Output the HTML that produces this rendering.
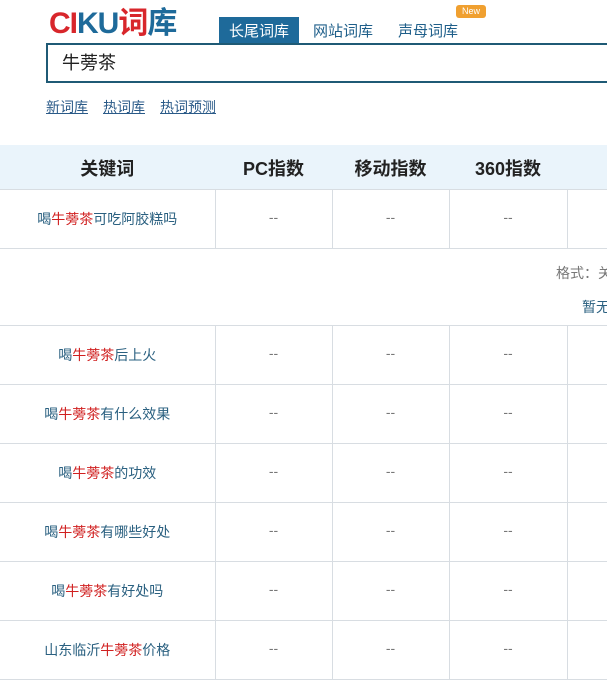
<!DOCTYPE html>
<html><head><meta charset="utf-8"><style>
body{margin:0;width:607px;height:680px;overflow:hidden;background:#fff;font-family:"Liberation Sans","Noto Sans CJK SC",sans-serif;position:relative}
.a{position:absolute;white-space:nowrap}
.logo{left:49px;top:6px;font-size:30px;font-weight:bold;letter-spacing:-1px;line-height:36px}
.tab{top:17px;height:27px;line-height:29px;font-size:15px;color:#1f5f8a}
.search{left:46px;top:43px;width:600px;height:36px;border:2px solid #1f5a75;font-size:18px;line-height:36px;text-indent:14px;color:#222}
.links{left:46px;top:97px;font-size:14px;color:#2a5a88}
.links span{text-decoration:underline;margin-right:15px}
table{position:absolute;left:0;top:145px;border-collapse:collapse;table-layout:fixed;width:720px}
td,th{border:1px solid #d8dde2;text-align:center;font-size:14px;color:#777;padding:0}
tr td:first-child,tr th:first-child{border-left:none}
th{background:#eaf4fb;height:43px;font-size:18px;color:#222;border-color:#eaf4fb;border-bottom:1px solid #d8dde2}
td.k{color:#2a6080}
td.k b{font-weight:normal;color:#d02020}
tr.r td{height:58px;vertical-align:middle}
tr.r td:not(.k){vertical-align:top;padding-top:19px;height:39px}
</style></head><body>
<div class="a logo"><span style="color:#d8262b">CI</span><span style="color:#1e6a9a">KU</span><span style="color:#d8262b">词</span><span style="color:#1e6a9a">库</span></div>
<div class="a tab" style="left:219px;width:80px;background:#1e6a9a;color:#fff;text-align:center">长尾词库</div>
<div class="a tab" style="left:313px">网站词库</div>
<div class="a tab" style="left:398px">声母词库</div>
<div class="a" style="left:456px;top:5px;width:30px;height:13px;background:#f0a030;border-radius:3px;color:#fff;font-size:9px;line-height:13px;text-align:center">New</div>
<div class="a search">牛蒡茶</div>
<div class="a links"><span>新词库</span><span>热词库</span><span>热词预测</span></div>
<table>
<colgroup><col style="width:215px"><col style="width:117px"><col style="width:117px"><col style="width:118px"><col></colgroup>
<tr><th>关键词</th><th>PC指数</th><th>移动指数</th><th>360指数</th><th></th></tr>
<tr class="r"><td class="k">喝<b>牛蒡茶</b>可吃阿胶糕吗</td><td>--</td><td>--</td><td>--</td><td></td></tr>
<tr><td colspan="5" style="height:76px"></td></tr>
<tr class="r"><td class="k">喝<b>牛蒡茶</b>后上火</td><td>--</td><td>--</td><td>--</td><td></td></tr>
<tr class="r"><td class="k">喝<b>牛蒡茶</b>有什么效果</td><td>--</td><td>--</td><td>--</td><td></td></tr>
<tr class="r"><td class="k">喝<b>牛蒡茶</b>的功效</td><td>--</td><td>--</td><td>--</td><td></td></tr>
<tr class="r"><td class="k">喝<b>牛蒡茶</b>有哪些好处</td><td>--</td><td>--</td><td>--</td><td></td></tr>
<tr class="r"><td class="k">喝<b>牛蒡茶</b>有好处吗</td><td>--</td><td>--</td><td>--</td><td></td></tr>
<tr class="r"><td class="k">山东临沂<b>牛蒡茶</b>价格</td><td>--</td><td>--</td><td>--</td><td></td></tr>
</table>
<div class="a" style="left:556px;top:263px;font-size:14px;color:#777">格式：关</div>
<div class="a" style="left:582px;top:297px;font-size:14px;color:#2a6080">暂无</div>
</body></html>
